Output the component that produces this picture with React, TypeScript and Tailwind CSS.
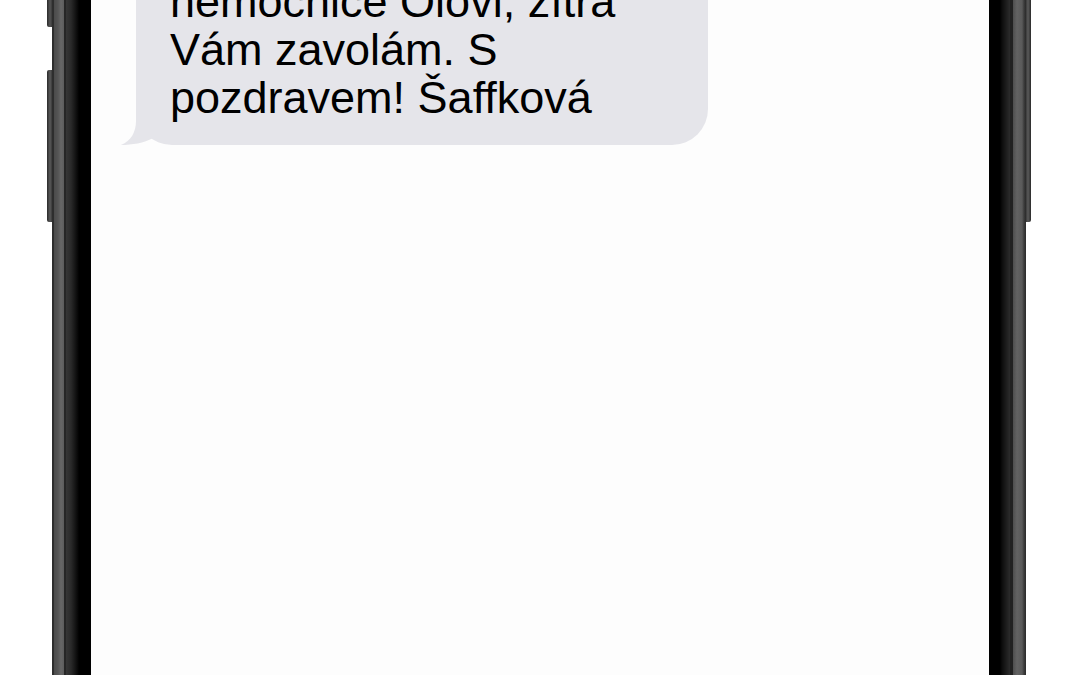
export default function App() {
  return (
    <div className="h-[675px] w-[1080px] overflow-hidden bg-white flex font-['Liberation_Sans',Arial,sans-serif]">
      <div className="w-[52px] shrink-0" />

      {/* left bezel */}
      <div className="relative w-[39px] shrink-0 bg-[linear-gradient(to_right,#2e2e2e_0px,#2e2e2e_2px,#4b4b4b_2px,#555_6px,#676767_9px,#5c5c5c_12px,#262626_12px,#262626_14px,#363636_14px,#2a2a2a_19px,#060606_26px,#000_27px,#000_39px)]">
        <div className="absolute -left-[5px] -top-[10px] h-[37px] w-[5px] rounded-l-[2px] bg-[linear-gradient(to_right,#2a2a2a,#555_60%,#3a3a3a)]" />
        <div className="absolute -left-[5px] top-[70px] h-[152px] w-[5px] rounded-l-[2px] bg-[linear-gradient(to_right,#2a2a2a,#5a5a5a_60%,#3a3a3a)]" />
      </div>

      {/* screen */}
      <div className="w-[898px] shrink-0 bg-[#fdfdfd]">
        <div className="relative ml-[45px] -mt-[34px] w-[572px] rounded-[36px] bg-[#e5e5ea] pl-[34px] pr-[20px] pt-[12px] pb-[23px]">
          <svg
            className="absolute -left-[16px] bottom-0"
            width="40"
            height="40"
            viewBox="0 0 40 40"
          >
            <path d="M16 0 L16 16 C16 27 11 36 1 40 C12 40 24 38 33 33 L33 0 Z" fill="#e5e5ea" />
          </svg>
          <p className="relative text-[45px] leading-[48px] text-black">
            nemocnice Olovi, zítra
            <br />
            Vám zavolám. S
            <br />
            pozdravem! Šaffková
          </p>
        </div>
      </div>

      {/* right bezel */}
      <div className="relative w-[37px] shrink-0 bg-[linear-gradient(to_right,#000_0px,#000_11px,#0c0c0c_13px,#2c2c2c_21px,#222_21px,#222_24px,#4e4e4e_24px,#636363_28px,#5a5a5a_33px,#3c3c3c_35px,#2a2a2a_37px)]">
        <div className="absolute -right-[5px] -top-[10px] h-[232px] w-[5px] rounded-r-[2px] bg-[linear-gradient(to_right,#3a3a3a,#5a5a5a_40%,#2a2a2a)]" />
      </div>
    </div>
  )
}
